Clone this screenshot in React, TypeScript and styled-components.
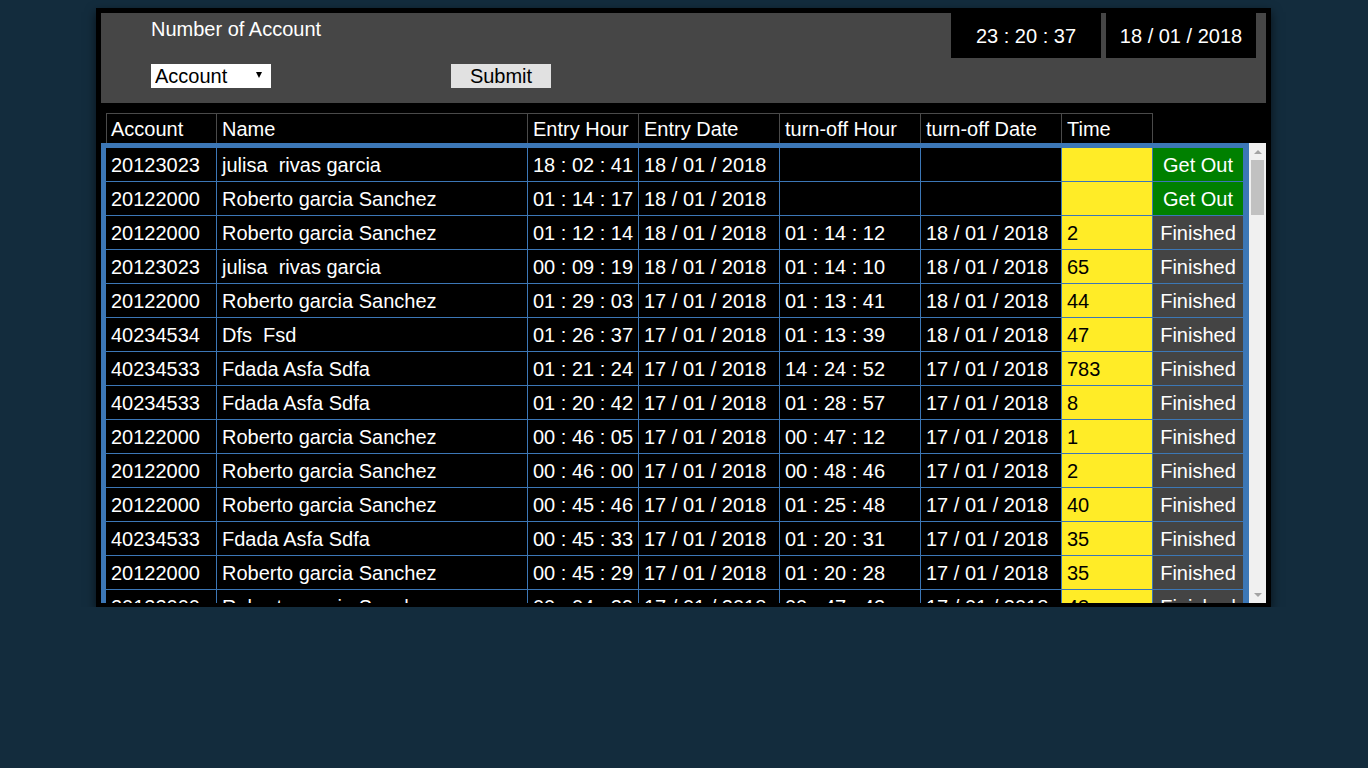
import React from 'react';
import styled, { createGlobalStyle } from 'styled-components';

const BLUE = '#3c77b6';
const HEAD_LINE = '#4a4a4a';
const BODY_COLS = '111px 311px 111px 141px 141px 141px 91px 91px';
const HEAD_COLS = '111px 311px 111px 141px 141px 141px 91px';

const GlobalStyle = createGlobalStyle`
  html, body {
    margin: 0;
    padding: 0;
    background: #132c3d;
  }
  body {
    font-family: "Liberation Sans", Arial, sans-serif;
    font-size: 20px;
    color: #fff;
  }
`;

const Frame = styled.div`
  width: 1175px;
  margin: 8px 0 0 96px;
  box-sizing: border-box;
  border: 5px solid #000;
  border-bottom-width: 4px;
  background: #000;
  box-shadow: 0 4px 10px rgba(0, 0, 0, 0.6);
`;

const TopPanel = styled.div`
  height: 90px;
  background: #464646;
  display: flex;
  justify-content: space-between;
  align-items: flex-start;
`;

const FormSide = styled.div`
  padding: 4px 0 0 50px;
  display: flex;
  flex-direction: column;
`;

const Title = styled.div`
  line-height: 24px;
  height: 24px;
`;

const FormRow = styled.div`
  margin-top: 23px;
  display: flex;
  align-items: center;
`;

const SelectBox = styled.div`
  position: relative;
  width: 120px;
  height: 24px;
  background: #fff;
`;

const Select = styled.select`
  appearance: none;
  -webkit-appearance: none;
  width: 100%;
  height: 24px;
  border: none;
  outline: none;
  background: transparent;
  color: #000;
  font-family: "Liberation Sans", Arial, sans-serif;
  font-size: 20px;
  padding: 0 0 0 4px;
  margin: 0;
  line-height: 24px;
`;

const Caret = styled.span`
  position: absolute;
  right: 9px;
  top: 8px;
  width: 0;
  height: 0;
  border-left: 3px solid transparent;
  border-right: 3px solid transparent;
  border-top: 6px solid #000;
  pointer-events: none;
`;

const SubmitButton = styled.button`
  margin-left: 180px;
  width: 100px;
  height: 24px;
  border: none;
  padding: 0;
  background: #e1e1e1;
  color: #000;
  font-family: "Liberation Sans", Arial, sans-serif;
  font-size: 20px;
  line-height: 24px;
`;

const Clocks = styled.div`
  display: flex;
  gap: 5px;
  margin-right: 10px;
`;

const Clock = styled.div`
  width: 150px;
  height: 45px;
  background: #000;
  display: flex;
  align-items: center;
  justify-content: center;
  padding-top: 1px;
  box-sizing: border-box;
`;

const HeaderRow = styled.div`
  margin: 10px 0 0 5px;
  width: max-content;
  display: grid;
  grid-template-columns: ${HEAD_COLS};
  border-top: 1px solid ${HEAD_LINE};
`;

const HeadCell = styled.div`
  height: 29px;
  box-sizing: border-box;
  padding: 4px 5px 0;
  line-height: 23px;
  border-right: 1px solid ${HEAD_LINE};
  white-space: nowrap;
  &:first-child {
    border-left: 1px solid ${HEAD_LINE};
    padding-left: 4px;
  }
`;

const Body = styled.div`
  height: 460px;
  display: flex;
`;

const Viewport = styled.div`
  width: 1148px;
  flex: none;
  overflow: hidden;
`;

const ScrollBar = styled.div`
  width: 17px;
  flex: none;
  background: #f0f0f0;
  display: flex;
  flex-direction: column;
`;

const ArrowButton = styled.div<{ $dir: 'up' | 'down' }>`
  height: 17px;
  flex: none;
  display: flex;
  align-items: center;
  justify-content: center;
  &::before {
    content: '';
    width: 0;
    height: 0;
    border-left: 4px solid transparent;
    border-right: 4px solid transparent;
    ${({ $dir }) => ($dir === 'up' ? 'border-bottom: 4px solid #a3a3a3;' : 'border-top: 4px solid #a3a3a3;')}
  }
`;

const Track = styled.div`
  flex: 1;
`;

const Thumb = styled.div`
  height: 55px;
  margin: 0 2px;
  background: #c1c1c1;
`;

const Table = styled.div`
  width: 1148px;
  box-sizing: border-box;
  border: 5px solid ${BLUE};
  display: grid;
  grid-template-columns: ${BODY_COLS};
`;

type Tone = 'plain' | 'time' | 'out' | 'done';

const toneBg: Record<Tone, string> = {
  plain: '#000',
  time: '#ffec27',
  out: '#008000',
  done: '#444444',
};

const Cell = styled.div<{ $tone: Tone }>`
  height: 34px;
  box-sizing: border-box;
  display: flex;
  align-items: center;
  justify-content: ${({ $tone }) => ($tone === 'out' || $tone === 'done' ? 'center' : 'flex-start')};
  padding: 1px 5px 0;
  white-space: pre;
  overflow: hidden;
  background: ${({ $tone }) => toneBg[$tone]};
  color: ${({ $tone }) => ($tone === 'time' ? '#000' : '#fff')};
  border-right: 1px solid ${BLUE};
  border-bottom: 1px solid ${BLUE};
`;

type Entry = {
  account: string;
  name: string;
  inHour: string;
  inDate: string;
  outHour: string;
  outDate: string;
  time: string;
  out: boolean;
};

const rows: string[][] = [
  ['20123023', 'julisa  rivas garcia', '18 : 02 : 41', '18 / 01 / 2018', '', '', '', 'out'],
  ['20122000', 'Roberto garcia Sanchez', '01 : 14 : 17', '18 / 01 / 2018', '', '', '', 'out'],
  ['20122000', 'Roberto garcia Sanchez', '01 : 12 : 14', '18 / 01 / 2018', '01 : 14 : 12', '18 / 01 / 2018', '2', ''],
  ['20123023', 'julisa  rivas garcia', '00 : 09 : 19', '18 / 01 / 2018', '01 : 14 : 10', '18 / 01 / 2018', '65', ''],
  ['20122000', 'Roberto garcia Sanchez', '01 : 29 : 03', '17 / 01 / 2018', '01 : 13 : 41', '18 / 01 / 2018', '44', ''],
  ['40234534', 'Dfs  Fsd', '01 : 26 : 37', '17 / 01 / 2018', '01 : 13 : 39', '18 / 01 / 2018', '47', ''],
  ['40234533', 'Fdada Asfa Sdfa', '01 : 21 : 24', '17 / 01 / 2018', '14 : 24 : 52', '17 / 01 / 2018', '783', ''],
  ['40234533', 'Fdada Asfa Sdfa', '01 : 20 : 42', '17 / 01 / 2018', '01 : 28 : 57', '17 / 01 / 2018', '8', ''],
  ['20122000', 'Roberto garcia Sanchez', '00 : 46 : 05', '17 / 01 / 2018', '00 : 47 : 12', '17 / 01 / 2018', '1', ''],
  ['20122000', 'Roberto garcia Sanchez', '00 : 46 : 00', '17 / 01 / 2018', '00 : 48 : 46', '17 / 01 / 2018', '2', ''],
  ['20122000', 'Roberto garcia Sanchez', '00 : 45 : 46', '17 / 01 / 2018', '01 : 25 : 48', '17 / 01 / 2018', '40', ''],
  ['40234533', 'Fdada Asfa Sdfa', '00 : 45 : 33', '17 / 01 / 2018', '01 : 20 : 31', '17 / 01 / 2018', '35', ''],
  ['20122000', 'Roberto garcia Sanchez', '00 : 45 : 29', '17 / 01 / 2018', '01 : 20 : 28', '17 / 01 / 2018', '35', ''],
  ['20122000', 'Roberto garcia Sanchez', '00 : 04 : 29', '17 / 01 / 2018', '00 : 47 : 42', '17 / 01 / 2018', '43', ''],
];

const entries: Entry[] = rows.map(([account, name, inHour, inDate, outHour, outDate, time, out]) => ({
  account,
  name,
  inHour,
  inDate,
  outHour,
  outDate,
  time,
  out: out === 'out',
}));

const headers = ['Account', 'Name', 'Entry Hour', 'Entry Date', 'turn-off Hour', 'turn-off Date', 'Time'];

export default function App(): JSX.Element {
  return (
    <>
      <GlobalStyle />
      <Frame>
        <TopPanel>
          <FormSide>
            <Title>Number of Account</Title>
            <FormRow>
              <SelectBox>
                <Select defaultValue="account">
                  <option value="account">Account</option>
                  <option value="20122000">20122000</option>
                  <option value="20123023">20123023</option>
                  <option value="40234533">40234533</option>
                  <option value="40234534">40234534</option>
                </Select>
                <Caret />
              </SelectBox>
              <SubmitButton type="button">Submit</SubmitButton>
            </FormRow>
          </FormSide>
          <Clocks>
            <Clock>23 : 20 : 37</Clock>
            <Clock>18 / 01 / 2018</Clock>
          </Clocks>
        </TopPanel>
        <HeaderRow>
          {headers.map(h => (
            <HeadCell key={h}>{h}</HeadCell>
          ))}
        </HeaderRow>
        <Body>
          <Viewport>
            <Table>
              {entries.map((e, i) => (
                <React.Fragment key={i}>
                  <Cell $tone="plain">{e.account}</Cell>
                  <Cell $tone="plain">{e.name}</Cell>
                  <Cell $tone="plain">{e.inHour}</Cell>
                  <Cell $tone="plain">{e.inDate}</Cell>
                  <Cell $tone="plain">{e.outHour}</Cell>
                  <Cell $tone="plain">{e.outDate}</Cell>
                  <Cell $tone="time">{e.time}</Cell>
                  <Cell $tone={e.out ? 'out' : 'done'}>{e.out ? 'Get Out' : 'Finished'}</Cell>
                </React.Fragment>
              ))}
            </Table>
          </Viewport>
          <ScrollBar>
            <ArrowButton $dir="up" />
            <Track>
              <Thumb />
            </Track>
            <ArrowButton $dir="down" />
          </ScrollBar>
        </Body>
      </Frame>
    </>
  );
}
